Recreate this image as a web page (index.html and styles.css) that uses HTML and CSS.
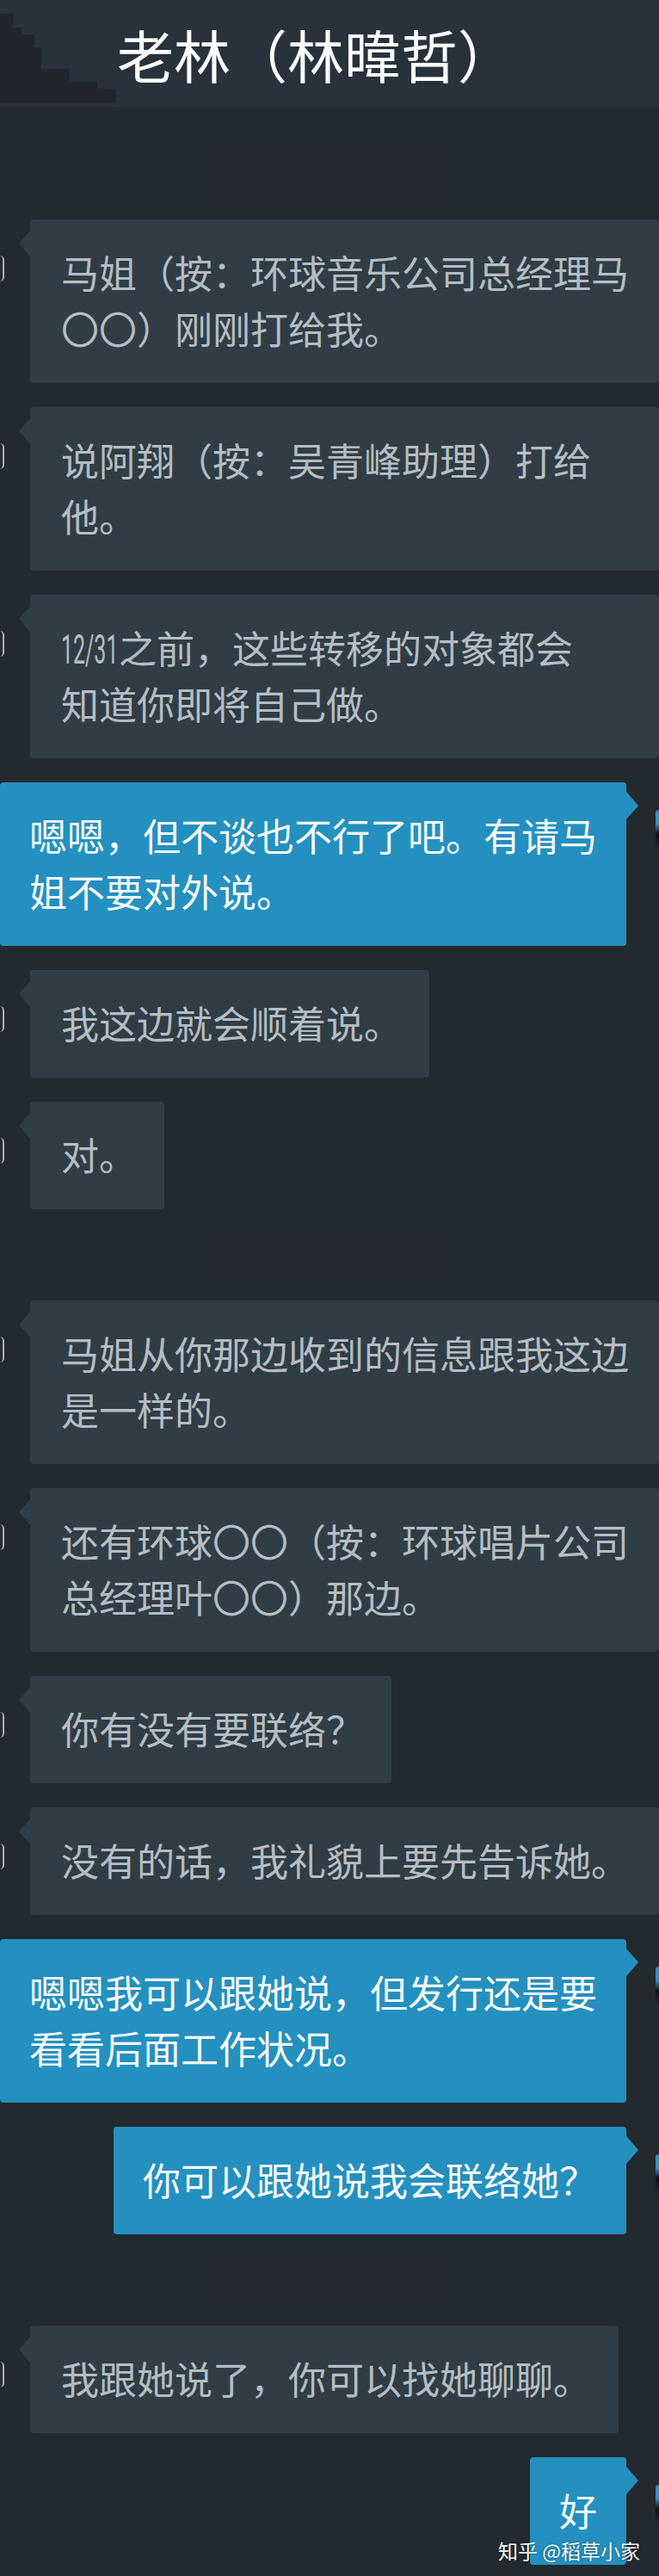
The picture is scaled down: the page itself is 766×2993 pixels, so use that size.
FILE: index.html
```html
<!DOCTYPE html>
<html lang="zh-CN">
<head>
<meta charset="utf-8">
<title>老林（林暐哲）</title>
<link rel="stylesheet" href="styles.css">
</head>
<body>
<div class="page">
  <header class="topbar">
    <svg class="shade" width="140" height="125" viewBox="0 0 140 125" aria-hidden="true">
      <path d="M0 16 H15 V32 H25 V40 H40 V55 H48 V80 H80 V95 H113 V103 H135 V120 H0 Z" fill="#1d2328" opacity="0.75"/>
    </svg>
    <h1 class="title">老林（林暐哲）</h1>
  </header>

  <main class="chat">
    <div class="time-gap"></div>

    <div class="row left"><div class="side"><span class="av-l"></span></div><div class="bubble in wide">马姐（按：环球音乐公司总经理马<br>〇〇）刚刚打给我。</div></div>
    <div class="row left"><div class="side"><span class="av-l"></span></div><div class="bubble in wide">说阿翔（按：吴青峰助理）打给<br>他。</div></div>
    <div class="row left"><div class="side"><span class="av-l"></span></div><div class="bubble in wide"><span class="num"><span class="num-in">12/31</span></span>之前，这些转移的对象都会<br>知道你即将自己做。</div></div>
    <div class="row right"><div class="bubble out">嗯嗯，但不谈也不行了吧。有请马<br>姐不要对外说。</div><div class="side"><span class="av-r"></span></div></div>
    <div class="row left"><div class="side"><span class="av-l"></span></div><div class="bubble in">我这边就会顺着说。</div></div>
    <div class="row left"><div class="side"><span class="av-l"></span></div><div class="bubble in">对。</div></div>

    <div class="time-gap"></div>

    <div class="row left"><div class="side"><span class="av-l"></span></div><div class="bubble in wide">马姐从你那边收到的信息跟我这边<br>是一样的。</div></div>
    <div class="row left"><div class="side"><span class="av-l"></span></div><div class="bubble in wide">还有环球〇〇（按：环球唱片公司<br>总经理叶〇〇）那边。</div></div>
    <div class="row left"><div class="side"><span class="av-l"></span></div><div class="bubble in">你有没有要联络？</div></div>
    <div class="row left"><div class="side"><span class="av-l"></span></div><div class="bubble in wide">没有的话，我礼貌上要先告诉她。</div></div>
    <div class="row right"><div class="bubble out">嗯嗯我可以跟她说，但发行还是要<br>看看后面工作状况。</div><div class="side"><span class="av-r"></span></div></div>
    <div class="row right"><div class="bubble out">你可以跟她说我会联络她？</div><div class="side"><span class="av-r"></span></div></div>

    <div class="time-gap"></div>

    <div class="row left"><div class="side"><span class="av-l"></span></div><div class="bubble in">我跟她说了，你可以找她聊聊。</div></div>
    <div class="row right"><div class="bubble out">好</div><div class="side"><span class="av-r"></span></div></div>
  </main>

  <div class="watermark">知乎 @稻草小家</div>
</div>
</body>
</html>
```

FILE: styles.css
```css
* { box-sizing: border-box; }

html, body {
  margin: 0;
  padding: 0;
  background: #22292f;
}

body {
  width: 766px;
  overflow-x: hidden;
  font-family: "Noto Sans CJK SC", "Noto Sans", sans-serif;
}

.page {
  position: relative;
  width: 766px;
  min-height: 2993px;
  background: #22292f;
}

.topbar {
  position: relative;
  height: 125px;
  background: #29323a;
  display: flex;
  align-items: center;
  padding-left: 136px;
  border-bottom: 1px solid #252d33;
}

.shade {
  position: absolute;
  left: 0;
  top: 0;
}

.title {
  position: relative;
  margin: 0;
  font-size: 66px;
  line-height: 1;
  font-weight: 400;
  color: #ffffff;
  white-space: nowrap;
}

.chat {
  display: flex;
  flex-direction: column;
  gap: 28px;
  padding-top: 52px;
  padding-bottom: 13px;
}

.time-gap {
  height: 50px;
  width: 263px;
  align-self: center;
  border-radius: 8px;
  background: #23292f;
}

.row {
  display: flex;
  align-items: flex-start;
}

.row.right {
  justify-content: flex-end;
}

.side {
  flex: none;
  display: flex;
}

.row.left .side {
  width: 35px;
  padding-top: 42px;
}

.row.right .side {
  width: 38px;
  justify-content: flex-end;
  padding-top: 32px;
}

.av-l {
  display: block;
  width: 5px;
  height: 30px;
  border-right: 2px solid #aab0b4;
  border-radius: 0 15px 15px 0 / 0 15px 15px 0;
}

.av-r {
  display: block;
  width: 4px;
  height: 46px;
  border-radius: 4px 0 0 4px;
  background: linear-gradient(#2d93c4 0%, #2d93c4 35%, #0d1216 60%, #1a2a36 100%);
}

.bubble {
  position: relative;
  font-size: 44px;
  line-height: 65px;
  height: auto;
  padding: 29px 32px 31px 36px;
  border-radius: 4px;
  white-space: nowrap;
}

.bubble.in {
  max-width: 731px;
  background: #303d45;
  color: #b6bdc2;
}

.bubble.in.wide {
  width: 731px;
}

.bubble.in::before {
  content: "";
  position: absolute;
  left: -13px;
  top: 13px;
  border-top: 15px solid transparent;
  border-bottom: 15px solid transparent;
  border-right: 13px solid #303d45;
}

.bubble.out {
  max-width: 729px;
  padding: 29px 34px 31px 34px;
  background: #2490bf;
  color: #f5f9fb;
}

.bubble.out::after {
  content: "";
  position: absolute;
  right: -14px;
  top: 11px;
  border-top: 16px solid transparent;
  border-bottom: 16px solid transparent;
  border-left: 14px solid #2490bf;
}

.num {
  display: inline-block;
  width: 67px;
  line-height: 1;
  vertical-align: baseline;
}

.num-in {
  display: inline-block;
  font-family: "Roboto", "Liberation Sans", sans-serif;
  font-size: 48px;
  line-height: 1;
  transform: scaleX(0.52);
  transform-origin: left center;
}

.watermark {
  position: absolute;
  right: 22px;
  bottom: 18px;
  font-size: 23px;
  line-height: 1;
  color: #ffffff;
  text-shadow: 0 0 2px rgba(0, 0, 0, 0.6);
  white-space: nowrap;
}
```
